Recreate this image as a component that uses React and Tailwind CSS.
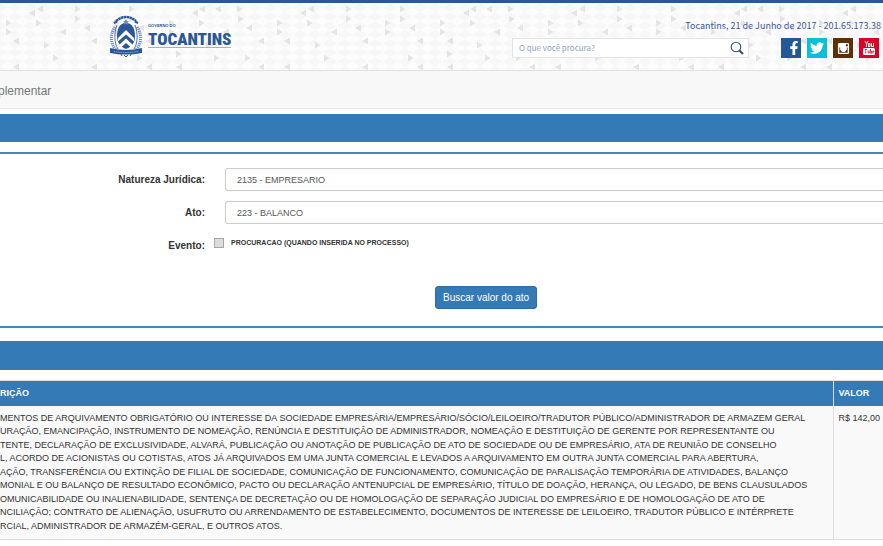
import { FaFacebookF, FaTwitter } from "react-icons/fa";

// [x, y, direction] of the darker triangles in one pattern tile
const TRIANGLES = [
  [252, 9, "r"], [253, 19, "r"], [262, 28, "l"], [260, 58, "r"],
  [21, 23, "r"], [21, 32, "r"], [3, 41, "l"], [29, 41, "l"],
  [45, 13, "l"], [53, 9, "l"], [51, 23, "r"], [59, 45, "r"],
  [68, 58, "r"], [76, 32, "l"], [90, 9, "r"], [90, 19, "r"],
  [100, 28, "l"], [107, 41, "l"], [107, 67, "l"], [3, 67, "l"],
  [29, 67, "l"], [144, 9, "r"], [144, 19, "r"], [129, 23, "r"],
  [129, 32, "r"], [154, 28, "l"], [162, 41, "l"], [162, 67, "l"],
  [152, 58, "r"], [184, 23, "r"], [184, 32, "r"], [192, 41, "l"],
  [192, 67, "l"], [191, 54, "r"], [208, 13, "l"], [215, 9, "l"],
  [231, 9, "l"], [214, 23, "r"], [221, 45, "r"], [229, 58, "r"],
  [239, 32, "l"],
];

const LINES = [
  "MENTOS DE ARQUIVAMENTO OBRIGATÓRIO OU INTERESSE DA SOCIEDADE EMPRESÁRIA/EMPRESÁRIO/SÓCIO/LEILOEIRO/TRADUTOR PÚBLICO/ADMINISTRADOR DE ARMAZEM GERAL",
  "URAÇÃO, EMANCIPAÇÃO, INSTRUMENTO DE NOMEAÇÃO, RENÚNCIA E DESTITUIÇÃO DE ADMINISTRADOR, NOMEAÇÃO E DESTITUIÇÃO DE GERENTE POR REPRESENTANTE OU",
  "TENTE, DECLARAÇÃO DE EXCLUSIVIDADE, ALVARÁ, PUBLICAÇÃO OU ANOTAÇÃO DE PUBLICAÇÃO DE ATO DE SOCIEDADE OU DE EMPRESÁRIO, ATA DE REUNIÃO DE CONSELHO",
  "L, ACORDO DE ACIONISTAS OU COTISTAS, ATOS JÁ ARQUIVADOS EM UMA JUNTA COMERCIAL E LEVADOS A ARQUIVAMENTO EM OUTRA JUNTA COMERCIAL PARA ABERTURA,",
  "AÇÃO, TRANSFERÊNCIA OU EXTINÇÃO DE FILIAL DE SOCIEDADE, COMUNICAÇÃO DE FUNCIONAMENTO, COMUNICAÇÃO DE PARALISAÇÃO TEMPORÁRIA DE ATIVIDADES, BALANÇO",
  "MONIAL E OU BALANÇO DE RESULTADO ECONÔMICO, PACTO OU DECLARAÇÃO ANTENUPCIAL DE EMPRESÁRIO, TÍTULO DE DOAÇÃO, HERANÇA, OU LEGADO, DE BENS CLAUSULADOS",
  "OMUNICABILIDADE OU INALIENABILIDADE, SENTENÇA DE DECRETAÇÃO OU DE HOMOLOGAÇÃO DE SEPARAÇÃO JUDICIAL DO EMPRESÁRIO E DE HOMOLOGAÇÃO DE ATO DE",
  "NCILIAÇÃO; CONTRATO DE ALIENAÇÃO, USUFRUTO OU ARRENDAMENTO DE ESTABELECIMENTO, DOCUMENTOS DE INTERESSE DE LEILOEIRO, TRADUTOR PÚBLICO E INTÉRPRETE",
  "RCIAL, ADMINISTRADOR DE ARMAZÉM-GERAL, E OUTROS ATOS.",
];

function HeaderPattern() {
  return (
    <svg className="absolute inset-0 h-full w-full" aria-hidden="true">
      <defs>
        <pattern id="mesh" width="15" height="9" patternUnits="userSpaceOnUse">
          <path d="M0 0L7 4.500L0 9ZM15 0L8 4.500L15 9Z" fill="#f7f7f8" />
        </pattern>
        <pattern id="tri" x="-13" y="-3" width="271" height="76" patternUnits="userSpaceOnUse">
          {TRIANGLES.map(([x, y, dir]) => (
            <path
              key={`${x}-${y}`}
              d={dir === "r" ? "M-2 -3.500L3.500 0L-2 3.500Z" : "M3 -3.500L-3 0L3 3.500Z"}
              transform={`translate(${x} ${y})`}
              fill="#e4e4e6"
            />
          ))}
        </pattern>
      </defs>
      <rect width="100%" height="100%" fill="#fcfcfc" />
      <rect width="100%" height="100%" fill="url(#mesh)" />
      <rect width="100%" height="100%" fill="url(#tri)" />
    </svg>
  );
}

function Crest() {
  return (
    <svg viewBox="0 0 34 42" className="h-[42px] w-[34px]" aria-hidden="true">
      <g fill="none" stroke="#2b5797">
        <path d="M7 6Q17 -2 27 6" strokeWidth="2.500" strokeDasharray="2.500 .4" />
        <path d="M5 8l3-1.500M29 8l-3-1.500" strokeWidth="2" />
        <path d="M6 12C1 19 1 28 7 35M28 12C33 19 33 28 27 35" strokeWidth="3" strokeDasharray="1.300 .8" opacity=".65" />
        <path d="M8 10C5 18 5 28 9 34M26 10C29 18 29 28 25 34" strokeWidth="1" opacity=".8" />
      </g>
      <path d="M17 8C10 8 8 15 8 21c0 6 3 11 9 13 6-2 9-7 9-13C26 15 24 8 17 8Z" fill="#2b5797" />
      <path d="M17 4l1 2 2 .4-1.500 1.400.5 2-2-1-2 1 .5-2L14 6.400l2-.4z" fill="#6d8dbd" />
      <path d="M9 23l8-8 8 8v3.500l-8-7-8 7z" fill="#fff" />
      <path d="M10 30l7-6.500 7 6.500-2 2.500-5-4.500-5 4.500z" fill="#fff" />
      <path d="M1 33q16 4 32 0v5q-16 3-32 0z" fill="#2b5797" />
      <path d="M5 36.500q12 2 24 0" stroke="#a9bedc" strokeDasharray="1 .8" fill="none" />
      <path d="M12 39l1 2M15 40l2 2 2-2M22 39l-1 2" stroke="#2b5797" fill="none" />
    </svg>
  );
}

function SearchIcon() {
  return (
    <svg viewBox="0 0 14 14" className="h-[14px] w-[14px]" fill="none" stroke="#34526e" aria-hidden="true">
      <circle cx="6" cy="6" r="4.800" strokeWidth="1.100" />
      <path d="M9.500 9.500L13 13" strokeWidth="2.200" />
    </svg>
  );
}

function InstagramIcon() {
  return (
    <svg viewBox="0 0 14 14" className="h-[13px] w-[13px]" aria-hidden="true">
      <path
        fillRule="evenodd"
        fill="currentColor"
        d="M2.500 1h9A1.500 1.500 0 0 1 13 2.500v9a1.500 1.500 0 0 1-1.500 1.500h-9A1.500 1.500 0 0 1 1 11.500v-9A1.500 1.500 0 0 1 2.500 1ZM9.500 2.300v2.200h2.200V2.300ZM2.500 6v5.500h9V6h-1.200a3.500 3.500 0 1 1-6.600 0Z"
      />
      <circle cx="7" cy="7.200" r="2.600" fill="none" stroke="currentColor" strokeWidth="1.500" />
    </svg>
  );
}

function YoutubeIcon() {
  return (
    <svg viewBox="0 0 12 14" className="h-[14px] w-3" fill="none" stroke="currentColor" aria-hidden="true">
      <path d="M2 0l1.500 3L5 0M3.500 3v3M5.500 2.500h1.500v3h-1.500zM8.500 2v3.500h2V2" />
      <rect x="0" y="7" width="12" height="7" rx="1.500" fill="currentColor" stroke="none" />
      <path
        d="M1.500 8.500h2.500M2.700 8.500v4M5 9.500v2.500h1.200V9.500M7.500 8v4.300h1V10h-1M10.800 12H9.700v-2h1.100v1"
        stroke="#dc0028"
        strokeWidth=".7"
      />
    </svg>
  );
}

function SocialLink({ label, className, children }) {
  return (
    <a href="#" aria-label={label} className={`flex h-5 w-5 items-center justify-center text-white ${className}`}>
      {children}
    </a>
  );
}

function Field({ id, label, option }) {
  return (
    <>
      <label htmlFor={id} className="text-right font-bold">
        {label}
      </label>
      <select
        id={id}
        className="h-[23px] appearance-none rounded-l-[3px] border border-r-0 border-[#ccc] bg-white px-[11px] text-[9px] text-[#555]"
      >
        <option>{option}</option>
      </select>
    </>
  );
}

export default function App() {
  return (
    <div className="overflow-hidden bg-white font-['Liberation_Sans',Arial,sans-serif] text-[10px] leading-[14px] text-[#333]">
      {/* Header */}
      <header className="relative border-t-3 border-b border-t-[#2b5797] border-b-[#e2e2e2]">
        <HeaderPattern />
        <div className="relative flex h-[67px] justify-between pl-[109px]">
          <a href="#" className="flex gap-[5px] pt-3 text-[#2b5797]">
            <Crest />
            <span className="mt-2 flex h-[25px] flex-col border-b border-[#9db3d4]">
              <span className="text-[4px] leading-[6px] font-bold">GOVERNO DO</span>
              <span className="font-['Liberation_Sans_Narrow','Roboto_Condensed',sans-serif] text-[17px] leading-[20px] font-black">
                TOCANTINS
              </span>
            </span>
          </a>
          <div className="flex flex-col items-end gap-[5px] pt-[16px] pr-[2px] font-['Noto_Sans_CJK_SC',sans-serif]">
            <p className="text-[9px] leading-[14px] text-[#3c5a9a]">Tocantins, 21 de Junho de 2017 - 201.65.173.38</p>
            <div className="mr-[2px] flex gap-[32px]">
              <form className="flex h-5 w-[237px] items-center border border-[#e3e3e8] bg-white pr-1 pl-[6px]">
                <input
                  aria-label="Pesquisar"
                  placeholder="O que você procura?"
                  className="min-w-0 flex-1 text-[8px] outline-none placeholder:text-[#8fa3bd]"
                />
                <button type="button" aria-label="Buscar">
                  <SearchIcon />
                </button>
              </form>
              <div className="flex gap-[6px]">
                <SocialLink label="Facebook" className="bg-[#235796] pl-[6px]">
                  <FaFacebookF size={14} />
                </SocialLink>
                <SocialLink label="Twitter" className="bg-[#08c0dd]">
                  <FaTwitter size={14} />
                </SocialLink>
                <SocialLink label="Instagram" className="bg-[#5d3108]">
                  <InstagramIcon />
                </SocialLink>
                <SocialLink label="YouTube" className="bg-[#dc0028]">
                  <YoutubeIcon />
                </SocialLink>
              </div>
            </div>
          </div>
        </div>
      </header>

      {/* Page title */}
      <div className="mb-[5px] border-b border-[#e7e7e7] bg-[#f8f8f8]">
        <h1 className="-ml-[2px] pt-3 pb-2 text-[12px] leading-[17px] text-[#777]">plementar</h1>
      </div>

      <main>
        <div className="h-7 bg-[#337ab7]" />

        <form className="mt-[10px] border-y-2 border-[#4287c0] pt-[14px] pb-[17px]">
          <div className="grid grid-cols-[205px_1fr] items-center gap-x-5 gap-y-[10px]">
            <Field id="natureza" label="Natureza Jurídica:" option="2135 - EMPRESARIO" />
            <Field id="ato" label="Ato:" option="223 - BALANCO" />
          </div>
          <div className="mt-[10px] flex gap-[9px]">
            <span className="w-[205px] pt-[5px] text-right font-bold">Evento:</span>
            <label className="flex h-[18px] items-center gap-[7px] text-[7px] font-bold">
              <input
                type="checkbox"
                className="h-[10px] w-[10px] appearance-none border border-[#a8a8a8] bg-[#dcdcdc]"
              />
              PROCURACAO (QUANDO INSERIDA NO PROCESSO)
            </label>
          </div>
          <div className="mt-[33px] pl-[435px]">
            <button type="button" className="h-[23px] rounded-[3px] border border-[#2e6da4] bg-[#337ab7] px-[7px] text-white">
              Buscar valor do ato
            </button>
          </div>
        </form>

        <div className="mt-[13px] h-[29px] bg-[#337ab7]" />

        <table className="mt-[10px] w-full table-fixed border-collapse border-y border-[#ddd] text-[9px] leading-normal">
          <thead>
            <tr className="bg-[#337ab7] text-left text-white">
              <th className="h-[25px] font-bold">RIÇÃO</th>
              <th className="w-[50px] border-l border-[#ddd] pl-[5px] font-bold">VALOR</th>
            </tr>
          </thead>
          <tbody>
            <tr className="bg-[#f9f9f9] align-top">
              <td className="pt-[6px] pb-[6px]">
                {LINES.map((line) => (
                  <span key={line} className="block whitespace-nowrap">
                    {line}
                  </span>
                ))}
              </td>
              <td className="border-l border-[#ddd] pt-[6px] pl-[5px] whitespace-nowrap">R$ 142,00</td>
            </tr>
          </tbody>
        </table>
      </main>
    </div>
  );
}
